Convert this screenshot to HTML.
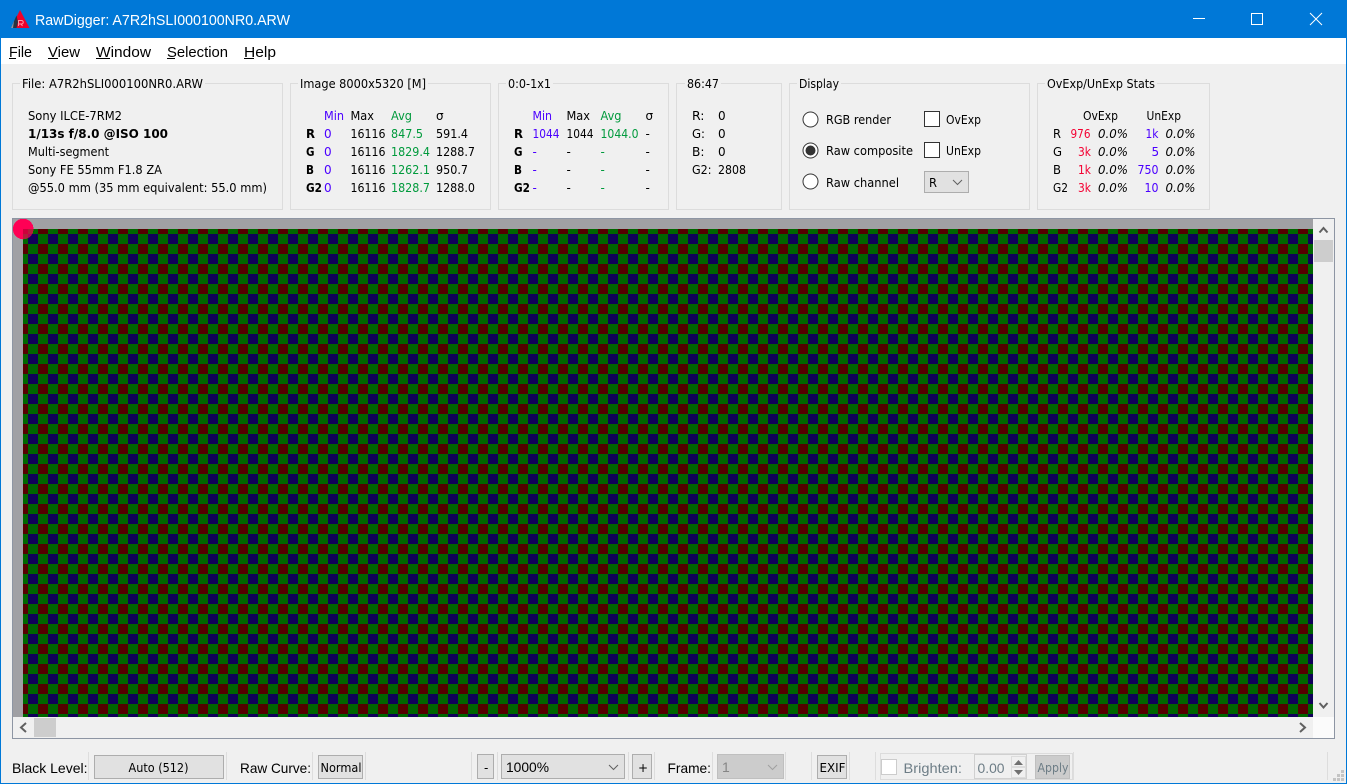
<!DOCTYPE html>
<html lang="en">
<head>
<meta charset="utf-8">
<title>RawDigger: A7R2hSLI000100NR0.ARW</title>
<style>
html,body{margin:0;padding:0;width:1347px;height:784px;overflow:hidden;background:#f0f0f0}
svg{display:block}
text{font-family:"DejaVu Sans","Liberation Sans",sans-serif;font-size:12px;fill:#000;white-space:pre}
.b{font-weight:bold}
.s{font-family:"Liberation Sans",sans-serif;font-size:14px}
.m{font-family:"Liberation Sans",sans-serif;font-size:15px}
.bl{fill:#4b00ff}
.gr{fill:#009a3c}
.rd{fill:#f40032}
.i{font-style:italic}
.dis{fill:#6f7f88}
.gb{fill:none;stroke:#dcdcdc}
.btn{fill:#e1e1e1;stroke:#adadad}
.sep{stroke:#dddddd}
.chev{fill:none;stroke:#606060;stroke-width:1}
.sc{fill:none;stroke:#606060;stroke-width:2}
</style>
</head>
<body>
<svg xmlns="http://www.w3.org/2000/svg" width="1347" height="784" viewBox="0 0 1347 784">
<defs>
<pattern id="bayer" patternUnits="userSpaceOnUse" x="18" y="224" width="20" height="20">
<rect x="0" y="0" width="10" height="10" fill="#550000"/>
<rect x="10" y="0" width="10" height="10" fill="#006600"/>
<rect x="0" y="10" width="10" height="10" fill="#006600"/>
<rect x="10" y="10" width="10" height="10" fill="#11005a"/>
</pattern>
<clipPath id="ov"><rect x="23" y="229" width="14" height="14"/></clipPath>
</defs>

<!-- window -->
<rect width="1347" height="784" fill="#f0f0f0"/>
<rect width="1347" height="38" fill="#0078d7"/>
<rect y="38" width="1347" height="26" fill="#ffffff"/>
<rect x="0" y="0" width="1" height="784" fill="#0078d7"/>
<rect x="1346" y="0" width="1" height="784" fill="#0078d7"/>
<rect x="0" y="783" width="1347" height="1" fill="#0078d7"/>

<!-- title bar -->
<polygon points="20,10 29.500,28 11,28" fill="#f0002a"/>
<polygon points="16.500,15.500 11,28 16.500,28 18,22" fill="#2c3440"/>
<polygon points="14,21 11,28 13,28" fill="#8a97a8"/>
<path d="M18.500 26V20.500h3a1.500 1.500 0 0 1 0 3.500H18.500M21 24l1.500 2" fill="none" stroke="#ff9aa8" stroke-width="1"/>
<text class="m" x="35" y="25" style="fill:#fff" textLength="255" lengthAdjust="spacingAndGlyphs">RawDigger: A7R2hSLI000100NR0.ARW</text>
<rect x="1193" y="18" width="12" height="1" fill="#fff"/>
<rect x="1251.500" y="13.500" width="11" height="11" fill="none" stroke="#fff"/>
<path d="M1310 13L1322 25M1322 13L1310 25" stroke="#fff" fill="none"/>

<!-- menu -->
<text class="m" x="9" y="57" textLength="23" lengthAdjust="spacingAndGlyphs">File</text>
<rect x="9" y="58" width="7" height="1" fill="#000"/>
<text class="m" x="48" y="57" textLength="32" lengthAdjust="spacingAndGlyphs">View</text>
<rect x="48" y="58" width="10" height="1" fill="#000"/>
<text class="m" x="96" y="57" textLength="55" lengthAdjust="spacingAndGlyphs">Window</text>
<rect x="96" y="58" width="14" height="1" fill="#000"/>
<text class="m" x="167" y="57" textLength="61" lengthAdjust="spacingAndGlyphs">Selection</text>
<rect x="167" y="58" width="8" height="1" fill="#000"/>
<text class="m" x="244" y="57" textLength="32" lengthAdjust="spacingAndGlyphs">Help</text>
<rect x="244" y="58" width="10" height="1" fill="#000"/>

<!-- group boxes -->
<rect class="gb" x="12.500" y="83.500" width="270" height="126"/>
<rect class="gb" x="290.500" y="83.500" width="200" height="126"/>
<rect class="gb" x="498.500" y="83.500" width="170" height="126"/>
<rect class="gb" x="676.500" y="83.500" width="105" height="126"/>
<rect class="gb" x="789.500" y="83.500" width="240" height="126"/>
<rect class="gb" x="1037.500" y="83.500" width="172" height="126"/>
<rect x="20" y="80" width="185" height="8" fill="#f0f0f0"/>
<rect x="298" y="80" width="130" height="8" fill="#f0f0f0"/>
<rect x="506" y="80" width="47" height="8" fill="#f0f0f0"/>
<rect x="685" y="80" width="36" height="8" fill="#f0f0f0"/>
<rect x="797" y="80" width="44" height="8" fill="#f0f0f0"/>
<rect x="1045" y="80" width="112" height="8" fill="#f0f0f0"/>
<text x="22" y="88" textLength="181" lengthAdjust="spacingAndGlyphs">File: A7R2hSLI000100NR0.ARW</text>
<text x="300" y="88" textLength="126" lengthAdjust="spacingAndGlyphs">Image 8000x5320 [M]</text>
<text x="508" y="88" textLength="43" lengthAdjust="spacingAndGlyphs">0:0-1x1</text>
<text x="687" y="88" textLength="32" lengthAdjust="spacingAndGlyphs">86:47</text>
<text x="799" y="88" textLength="40" lengthAdjust="spacingAndGlyphs">Display</text>
<text x="1047" y="88" textLength="108" lengthAdjust="spacingAndGlyphs">OvExp/UnExp Stats</text>

<!-- file info -->
<text x="28" y="120" textLength="94" lengthAdjust="spacingAndGlyphs">Sony ILCE-7RM2</text>
<text class="b" x="28" y="138" textLength="140" lengthAdjust="spacingAndGlyphs">1/13s f/8.0 @ISO 100</text>
<text x="28" y="156" textLength="81" lengthAdjust="spacingAndGlyphs">Multi-segment</text>
<text x="28" y="174" textLength="134" lengthAdjust="spacingAndGlyphs">Sony FE 55mm F1.8 ZA</text>
<text x="28" y="192" textLength="239" lengthAdjust="spacingAndGlyphs">@55.0 mm (35 mm equivalent: 55.0 mm)</text>

<!-- image stats -->
<text class="bl" x="324" y="120" textLength="20" lengthAdjust="spacingAndGlyphs">Min</text>
<text x="350.500" y="120" textLength="23.500" lengthAdjust="spacingAndGlyphs">Max</text>
<text class="gr" x="391" y="120" textLength="21" lengthAdjust="spacingAndGlyphs">Avg</text>
<text x="436" y="120">σ</text>
<text class="b" x="306" y="138" textLength="9" lengthAdjust="spacingAndGlyphs">R</text>
<text class="b" x="306" y="156" textLength="8.500" lengthAdjust="spacingAndGlyphs">G</text>
<text class="b" x="306" y="174" textLength="8" lengthAdjust="spacingAndGlyphs">B</text>
<text class="b" x="306" y="192" textLength="16" lengthAdjust="spacingAndGlyphs">G2</text>
<text class="bl" x="324" y="138">0</text>
<text class="bl" x="324" y="156">0</text>
<text class="bl" x="324" y="174">0</text>
<text class="bl" x="324" y="192">0</text>
<text x="350.500" y="138" textLength="35" lengthAdjust="spacingAndGlyphs">16116</text>
<text x="350.500" y="156" textLength="35" lengthAdjust="spacingAndGlyphs">16116</text>
<text x="350.500" y="174" textLength="35" lengthAdjust="spacingAndGlyphs">16116</text>
<text x="350.500" y="192" textLength="35" lengthAdjust="spacingAndGlyphs">16116</text>
<text class="gr" x="391" y="138" textLength="32" lengthAdjust="spacingAndGlyphs">847.5</text>
<text class="gr" x="391" y="156" textLength="39" lengthAdjust="spacingAndGlyphs">1829.4</text>
<text class="gr" x="391" y="174" textLength="39" lengthAdjust="spacingAndGlyphs">1262.1</text>
<text class="gr" x="391" y="192" textLength="39" lengthAdjust="spacingAndGlyphs">1828.7</text>
<text x="436" y="138" textLength="32" lengthAdjust="spacingAndGlyphs">591.4</text>
<text x="436" y="156" textLength="39" lengthAdjust="spacingAndGlyphs">1288.7</text>
<text x="436" y="174" textLength="32" lengthAdjust="spacingAndGlyphs">950.7</text>
<text x="436" y="192" textLength="39" lengthAdjust="spacingAndGlyphs">1288.0</text>

<!-- selection stats -->
<text class="bl" x="532.500" y="120" textLength="19.500" lengthAdjust="spacingAndGlyphs">Min</text>
<text x="566.500" y="120" textLength="23.500" lengthAdjust="spacingAndGlyphs">Max</text>
<text class="gr" x="600.500" y="120" textLength="21" lengthAdjust="spacingAndGlyphs">Avg</text>
<text x="645.500" y="120">σ</text>
<text class="b" x="514" y="138" textLength="9" lengthAdjust="spacingAndGlyphs">R</text>
<text class="b" x="514" y="156" textLength="8.500" lengthAdjust="spacingAndGlyphs">G</text>
<text class="b" x="514" y="174" textLength="8" lengthAdjust="spacingAndGlyphs">B</text>
<text class="b" x="514" y="192" textLength="16" lengthAdjust="spacingAndGlyphs">G2</text>
<text class="bl" x="532.500" y="138" textLength="27" lengthAdjust="spacingAndGlyphs">1044</text>
<text x="566.500" y="138" textLength="27" lengthAdjust="spacingAndGlyphs">1044</text>
<text class="gr" x="600.500" y="138" textLength="38" lengthAdjust="spacingAndGlyphs">1044.0</text>
<text x="645.500" y="138">-</text>
<text class="bl" x="532.500" y="156">-</text><text x="566.500" y="156">-</text><text class="gr" x="600.500" y="156">-</text><text x="645.500" y="156">-</text>
<text class="bl" x="532.500" y="174">-</text><text x="566.500" y="174">-</text><text class="gr" x="600.500" y="174">-</text><text x="645.500" y="174">-</text>
<text class="bl" x="532.500" y="192">-</text><text x="566.500" y="192">-</text><text class="gr" x="600.500" y="192">-</text><text x="645.500" y="192">-</text>

<!-- pixel -->
<text x="692" y="120" textLength="12.500" lengthAdjust="spacingAndGlyphs">R:</text>
<text x="692" y="138" textLength="13" lengthAdjust="spacingAndGlyphs">G:</text>
<text x="692" y="156" textLength="12.500" lengthAdjust="spacingAndGlyphs">B:</text>
<text x="692" y="174" textLength="19.500" lengthAdjust="spacingAndGlyphs">G2:</text>
<text x="718" y="120">0</text>
<text x="718" y="138">0</text>
<text x="718" y="156">0</text>
<text x="718" y="174" textLength="28" lengthAdjust="spacingAndGlyphs">2808</text>

<!-- display -->
<circle cx="810.500" cy="119.500" r="7.500" fill="#fff" stroke="#333"/>
<circle cx="810.500" cy="150.500" r="7.500" fill="#fff" stroke="#333"/>
<circle cx="810.500" cy="150.500" r="5" fill="#333"/>
<circle cx="810.500" cy="181.500" r="7.500" fill="#fff" stroke="#333"/>
<text x="826" y="124" textLength="65" lengthAdjust="spacingAndGlyphs">RGB render</text>
<text x="826" y="155" textLength="87" lengthAdjust="spacingAndGlyphs">Raw composite</text>
<text x="826" y="187" textLength="73" lengthAdjust="spacingAndGlyphs">Raw channel</text>
<rect x="924.500" y="111.500" width="15" height="15" fill="#fff" stroke="#333"/>
<rect x="924.500" y="142.500" width="15" height="15" fill="#fff" stroke="#333"/>
<text x="946" y="124" textLength="35" lengthAdjust="spacingAndGlyphs">OvExp</text>
<text x="946" y="155" textLength="35" lengthAdjust="spacingAndGlyphs">UnExp</text>
<rect class="btn" x="924.500" y="171.500" width="44" height="21"/>
<text x="929" y="187" textLength="8" lengthAdjust="spacingAndGlyphs">R</text>
<path class="chev" d="M953 180L957.500 184.500L962 180"/>

<!-- ovexp stats -->
<text x="1083" y="120" textLength="35" lengthAdjust="spacingAndGlyphs">OvExp</text>
<text x="1146.500" y="120" textLength="34.500" lengthAdjust="spacingAndGlyphs">UnExp</text>
<text x="1053" y="138" textLength="8" lengthAdjust="spacingAndGlyphs">R</text>
<text x="1053" y="156" textLength="9" lengthAdjust="spacingAndGlyphs">G</text>
<text x="1053" y="174" textLength="8" lengthAdjust="spacingAndGlyphs">B</text>
<text x="1053" y="192" textLength="15" lengthAdjust="spacingAndGlyphs">G2</text>
<text class="rd" x="1070.500" y="138" textLength="20" lengthAdjust="spacingAndGlyphs">976</text>
<text class="rd" x="1078" y="156" textLength="13" lengthAdjust="spacingAndGlyphs">3k</text>
<text class="rd" x="1078" y="174" textLength="13" lengthAdjust="spacingAndGlyphs">1k</text>
<text class="rd" x="1078" y="192" textLength="13" lengthAdjust="spacingAndGlyphs">3k</text>
<text class="i" x="1098" y="138" textLength="30" lengthAdjust="spacingAndGlyphs">0.0%</text>
<text class="i" x="1098" y="156" textLength="30" lengthAdjust="spacingAndGlyphs">0.0%</text>
<text class="i" x="1098" y="174" textLength="30" lengthAdjust="spacingAndGlyphs">0.0%</text>
<text class="i" x="1098" y="192" textLength="30" lengthAdjust="spacingAndGlyphs">0.0%</text>
<text class="bl" x="1145.500" y="138" textLength="13" lengthAdjust="spacingAndGlyphs">1k</text>
<text class="bl" x="1151.500" y="156">5</text>
<text class="bl" x="1137.500" y="174" textLength="21" lengthAdjust="spacingAndGlyphs">750</text>
<text class="bl" x="1144.500" y="192" textLength="14" lengthAdjust="spacingAndGlyphs">10</text>
<text class="i" x="1165.500" y="138" textLength="30" lengthAdjust="spacingAndGlyphs">0.0%</text>
<text class="i" x="1165.500" y="156" textLength="30" lengthAdjust="spacingAndGlyphs">0.0%</text>
<text class="i" x="1165.500" y="174" textLength="30" lengthAdjust="spacingAndGlyphs">0.0%</text>
<text class="i" x="1165.500" y="192" textLength="30" lengthAdjust="spacingAndGlyphs">0.0%</text>

<!-- image viewport -->
<rect x="13" y="219" width="1300" height="498" fill="#a0a0a4"/>
<circle cx="23.200" cy="229" r="10.300" fill="#ff0055" shape-rendering="crispEdges"/>
<rect x="23" y="229" width="1290" height="488" fill="url(#bayer)"/>
<circle cx="23.200" cy="229" r="10.300" fill="#ff0055" fill-opacity="0.7" clip-path="url(#ov)" shape-rendering="crispEdges"/>
<rect x="1313" y="219" width="21" height="498" fill="#f0f0f0"/>
<rect x="13" y="717" width="1300" height="21" fill="#f0f0f0"/>
<rect x="1313" y="717" width="21" height="21" fill="#fbfbfb"/>
<rect x="1314" y="240" width="19" height="22" fill="#cdcdcd"/>
<rect x="34" y="718" width="22" height="19" fill="#cdcdcd"/>
<path class="sc" d="M1319.500 232.500L1323.500 228L1327.500 232.500"/>
<path class="sc" d="M1319.500 703L1323.500 707.500L1327.500 703"/>
<path class="sc" d="M26 723L21 727.500L26 732"/>
<path class="sc" d="M1300 723L1305 727.500L1300 732"/>
<rect x="12.500" y="218.500" width="1322" height="520" fill="none" stroke="#8d95a3"/>

<!-- bottom toolbar -->
<g class="sep">
<line x1="88.500" y1="752" x2="88.500" y2="780"/>
<line x1="226.500" y1="752" x2="226.500" y2="780"/>
<line x1="312.500" y1="752" x2="312.500" y2="780"/>
<line x1="365.500" y1="752" x2="365.500" y2="780"/>
<line x1="471.500" y1="752" x2="471.500" y2="780"/>
<line x1="497.500" y1="752" x2="497.500" y2="780"/>
<line x1="628.500" y1="752" x2="628.500" y2="780"/>
<line x1="654.500" y1="752" x2="654.500" y2="780"/>
<line x1="712.500" y1="752" x2="712.500" y2="780"/>
<line x1="785.500" y1="752" x2="785.500" y2="780"/>
<line x1="811.500" y1="752" x2="811.500" y2="780"/>
<line x1="849.500" y1="752" x2="849.500" y2="780"/>
<line x1="875.500" y1="752" x2="875.500" y2="780"/>
<line x1="1073.500" y1="752" x2="1073.500" y2="780"/>
<line x1="1327.500" y1="752" x2="1327.500" y2="780"/>
</g>
<text class="s" x="12" y="773" textLength="75.500" lengthAdjust="spacingAndGlyphs">Black Level:</text>
<rect class="btn" x="94.500" y="755.500" width="129" height="23"/>
<text x="128.500" y="772" textLength="60" lengthAdjust="spacingAndGlyphs">Auto (512)</text>
<text class="s" x="240" y="773" textLength="71" lengthAdjust="spacingAndGlyphs">Raw Curve:</text>
<rect class="btn" x="318.500" y="755.500" width="44" height="23"/>
<text x="320.500" y="772" textLength="41" lengthAdjust="spacingAndGlyphs">Normal</text>

<rect class="btn" x="477.500" y="754.500" width="16" height="24"/>
<text x="484" y="772">-</text>
<rect class="btn" x="501.500" y="754.500" width="123" height="24"/>
<text class="s" x="506" y="772" textLength="43" lengthAdjust="spacingAndGlyphs">1000%</text>
<path class="chev" d="M609 765L613.500 769.500L618 765"/>
<rect class="btn" x="632.500" y="754.500" width="19" height="24"/>
<text x="638" y="772">+</text>
<text class="s" x="667.500" y="773" textLength="43.500" lengthAdjust="spacingAndGlyphs">Frame:</text>
<rect x="717.500" y="754.500" width="66" height="24" fill="#cccccc" stroke="#bfbfbf"/>
<text class="s dis" x="722" y="772" style="fill:#858585">1</text>
<path class="chev" style="stroke:#a0a0a0" d="M768 765L772.500 769.500L777 765"/>
<rect class="btn" x="817.500" y="755.500" width="29" height="23"/>
<text x="819.500" y="772" textLength="26" lengthAdjust="spacingAndGlyphs">EXIF</text>

<rect x="880.500" y="753.500" width="192" height="26" fill="none" stroke="#dcdcdc"/>
<rect x="881.500" y="759.500" width="15" height="15" fill="#fff" stroke="#cccccc"/>
<text class="s" x="903.500" y="773" textLength="58.500" lengthAdjust="spacingAndGlyphs" style="fill:#6d7d86">Brighten:</text>
<rect x="974.500" y="754.500" width="52" height="24" fill="none" stroke="#d0d0d0"/>
<text class="s" x="977.500" y="773" textLength="27" lengthAdjust="spacingAndGlyphs" style="fill:#6d7d86">0.00</text>
<rect x="1011.500" y="756.500" width="14" height="10" fill="none" stroke="#dcdcdc"/>
<rect x="1011.500" y="767.500" width="14" height="10" fill="none" stroke="#dcdcdc"/>
<polygon points="1014,765 1018.500,760 1023,765" fill="#707070"/>
<polygon points="1014,770 1023,770 1018.500,775" fill="#707070"/>
<rect x="1035.500" y="755.500" width="34" height="23" fill="#cccccc" stroke="#bfbfbf"/>
<text x="1037.500" y="772" textLength="31" lengthAdjust="spacingAndGlyphs" style="fill:#6d7d86">Apply</text>

<!-- size grip -->
<g fill="#c4c4c4">
<rect x="1341" y="770" width="3" height="3"/>
<rect x="1337" y="774" width="3" height="3"/>
<rect x="1341" y="774" width="3" height="3"/>
<rect x="1333" y="778" width="3" height="3"/>
<rect x="1337" y="778" width="3" height="3"/>
<rect x="1341" y="778" width="3" height="3"/>
</g>
</svg>
</body>
</html>
